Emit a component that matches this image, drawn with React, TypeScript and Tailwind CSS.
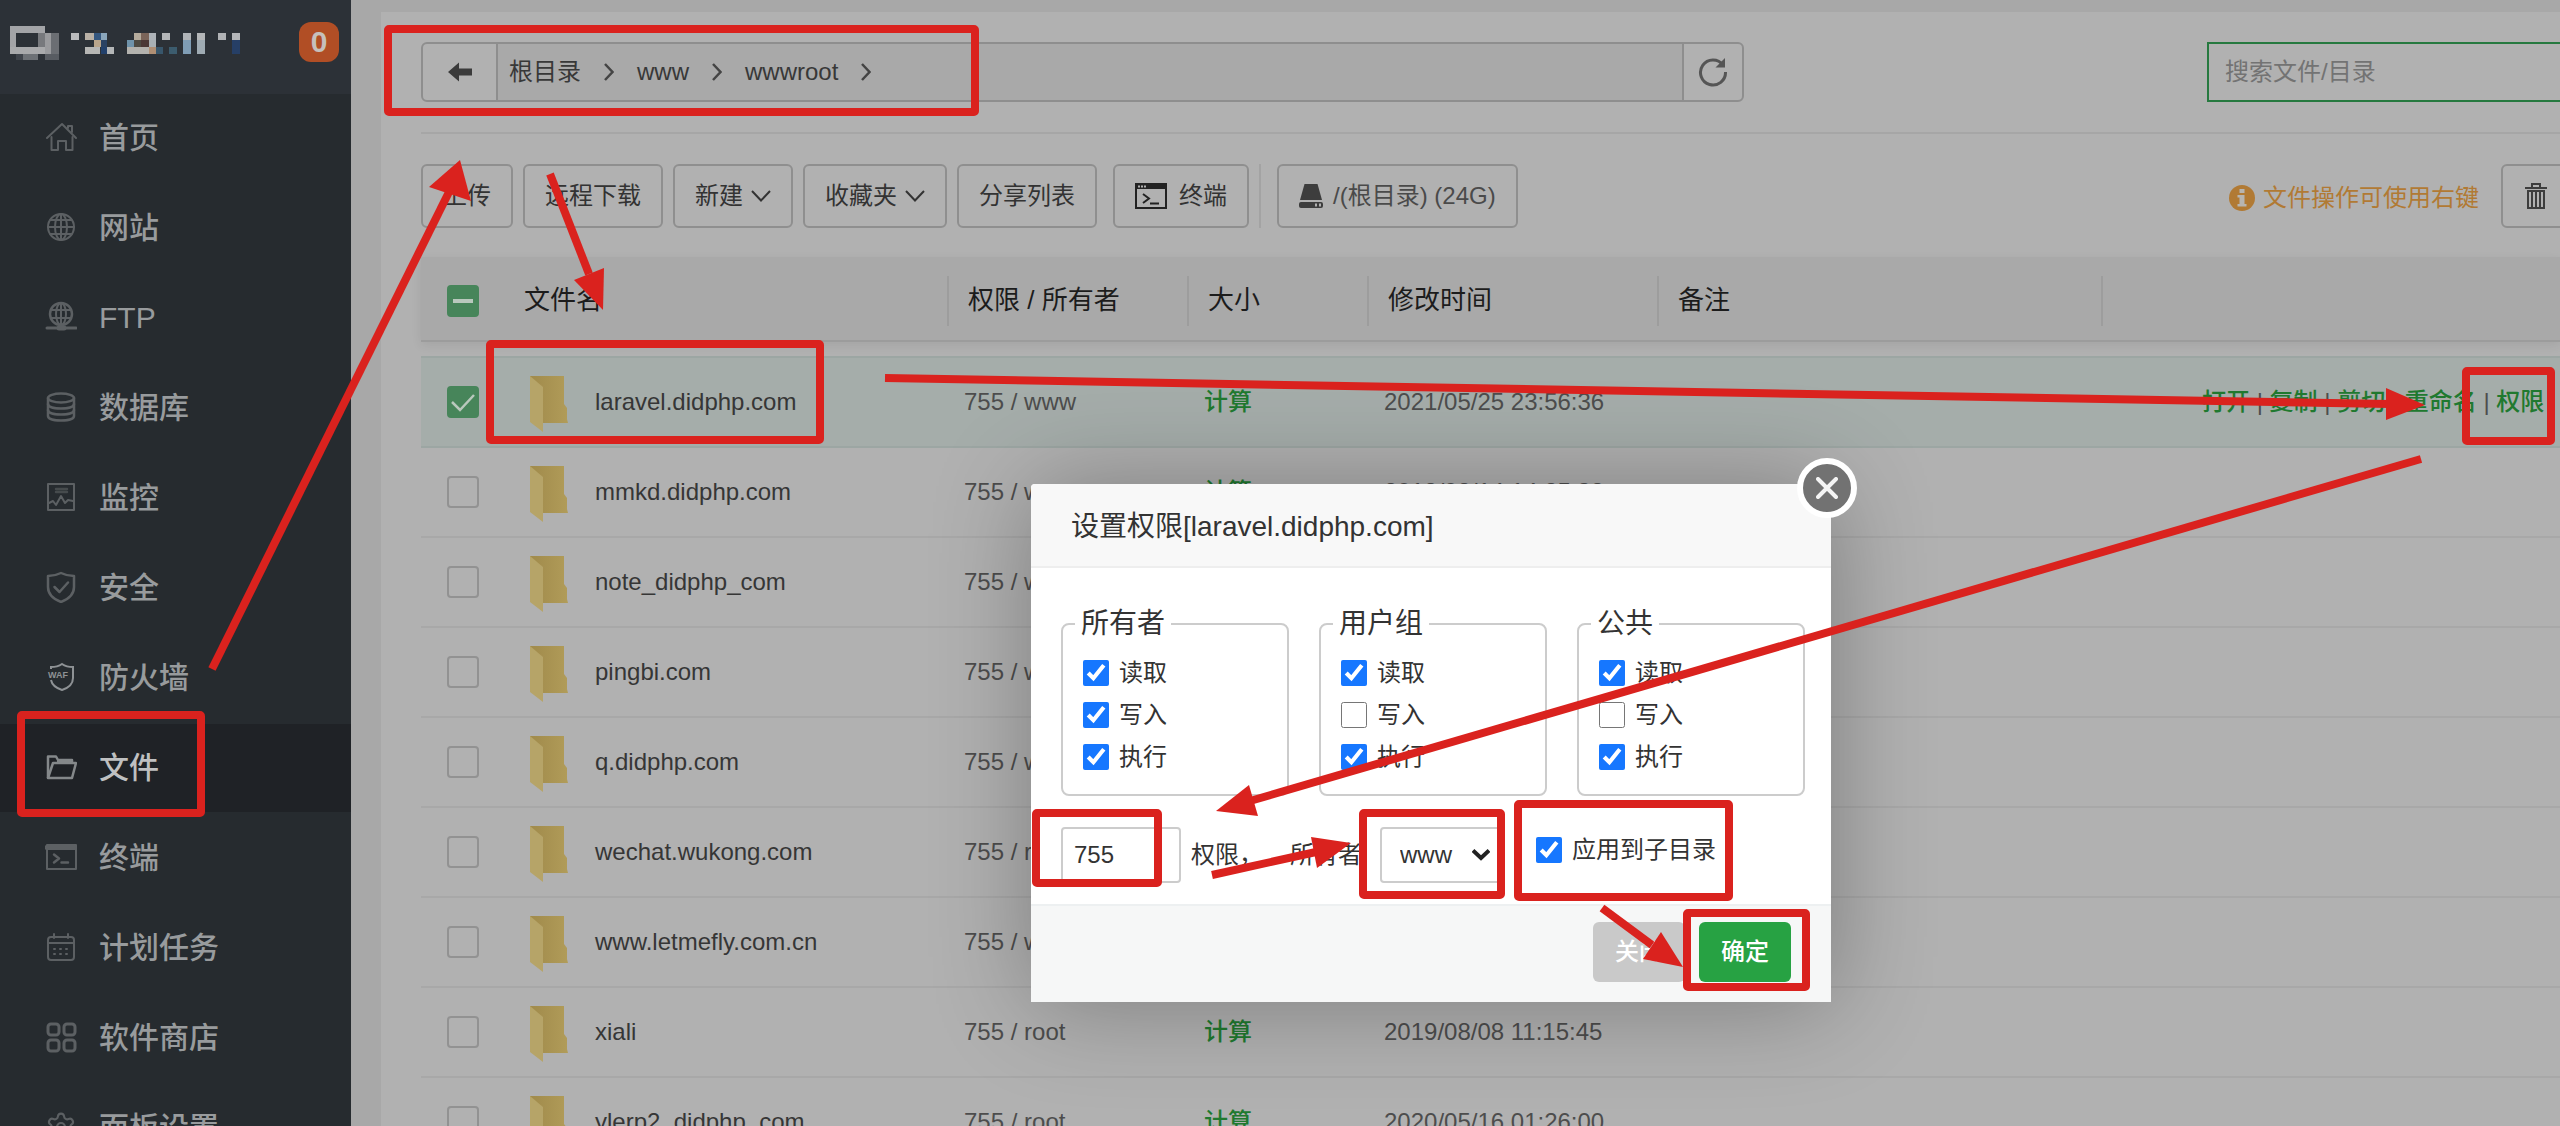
import type { ReactNode } from "react";
import { Settings } from "lucide-react";

/* ---------- sidebar icons (32 x 32) ---------- */

function Glyph({ children }: { children: ReactNode }) {
  return (
    <svg
      viewBox="0 0 32 32"
      className="size-8 shrink-0"
      fill="none"
      stroke="currentColor"
      strokeWidth="2"
      strokeLinecap="round"
      strokeLinejoin="round"
      aria-hidden="true"
    >
      {children}
    </svg>
  );
}

const HomeGlyph = (
  <Glyph>
    <path d="M2 17 L17 3 L31 17" />
    <path d="M23 7 V5 H27 V11" />
    <path d="M6.500 16 V29 H13 V20 H21 V29 H27.500 V16" />
  </Glyph>
);
const GlobeGlyph = (
  <Glyph>
    <circle cx="16" cy="16" r="13" />
    <ellipse cx="16" cy="16" rx="6" ry="13" />
    <path d="M16 3 V29 M3 16 H29 M5.500 9 H26.500 M5.500 23 H26.500" />
  </Glyph>
);
const FtpGlyph = (
  <Glyph>
    <circle cx="16" cy="13" r="11" strokeWidth="2.500" />
    <ellipse cx="16" cy="13" rx="5" ry="11" />
    <path d="M16 2 V24 M6 9 H26 M6 17 H26" />
    <path d="M2 27 H31" strokeWidth="3" />
    <path d="M14 27 H19" strokeWidth="5" />
  </Glyph>
);
const DatabaseGlyph = (
  <Glyph>
    <g strokeWidth="2.500">
      <ellipse cx="16" cy="7" rx="13" ry="4.500" />
      <path d="M3 7 V25 C3 31 29 31 29 25 V7" />
      <path d="M3 13 C3 19 29 19 29 13 M3 19 C3 25 29 25 29 19" />
    </g>
  </Glyph>
);
const MonitorGlyph = (
  <Glyph>
    <rect x="3" y="3" width="26" height="26" />
    <path d="M11 8 H22 M11 11 H22" strokeWidth="2.500" opacity="0.6" />
    <path d="M4 22 L8 20 L11 24 L16 15 L20 22 L23 19 L28 20" />
  </Glyph>
);
const SecurityGlyph = (
  <Glyph>
    <path d="M16 2 C12 4 8 5 3 5 V16 C3 23 8 28 16 31 C24 28 29 23 29 16 V5 C24 5 20 4 16 2 Z" strokeWidth="2.500" />
    <path d="M9.500 16 L14.500 21 L23 11.500" strokeWidth="2.500" />
  </Glyph>
);
const WafGlyph = (
  <svg viewBox="0 0 32 32" className="size-8 shrink-0 text-[#8e9295]" fill="none" stroke="currentColor" strokeWidth="2" aria-hidden="true">
    <path d="M6 8 V6 C11 6 14 5 17 3 C20 5 23 6 28 6 V17 C28 23 23 27 17 29 C11 27 7 24 6 19" />
    <text x="3" y="17" fontSize="9" fontWeight="700" stroke="none" fill="currentColor" fontFamily="Liberation Sans, sans-serif">
      WAF
    </text>
  </svg>
);
const FolderGlyph = (
  <svg viewBox="0 0 32 32" className="size-8 shrink-0 text-[#84888a]" fill="none" stroke="currentColor" strokeWidth="2.500" strokeLinejoin="round" aria-hidden="true">
    <path d="M3 27 V5.500 H11 L13 9 H27 V12" />
    <path d="M3 27 L8 12 H31 L27 27 Z" />
    <path d="M12 9.500 H27" strokeWidth="3" />
  </svg>
);
const TerminalGlyph = (
  <Glyph>
    <rect x="2" y="4" width="29" height="24" />
    <path d="M2 6.500 H31" strokeWidth="5" />
    <path d="M9 13.500 L14 17.500 L9 21.500 M16.500 21.500 H23" strokeWidth="2.500" />
  </Glyph>
);
const CalendarGlyph = (
  <Glyph>
    <rect x="3" y="6" width="26" height="23" rx="3" />
    <path d="M3 12 H29 M9 3 V7 M23 3 V7" />
    <path d="M9 18 H10 M15 18 H16 M21 18 H22 M9 23 H10 M15 23 H16 M21 23 H22" />
  </Glyph>
);
const StoreGlyph = (
  <Glyph>
    <g strokeWidth="3">
      <rect x="3" y="3" width="11" height="11" rx="3" />
      <rect x="19" y="3" width="11" height="11" rx="3" />
      <rect x="3" y="19" width="11" height="11" rx="3" />
      <rect x="19" y="19" width="11" height="11" rx="3" />
    </g>
  </Glyph>
);

const menu: { label: string; icon: ReactNode; active?: boolean }[] = [
  { label: "首页", icon: HomeGlyph },
  { label: "网站", icon: GlobeGlyph },
  { label: "FTP", icon: FtpGlyph },
  { label: "数据库", icon: DatabaseGlyph },
  { label: "监控", icon: MonitorGlyph },
  { label: "安全", icon: SecurityGlyph },
  { label: "防火墙", icon: WafGlyph },
  { label: "文件", icon: FolderGlyph, active: true },
  { label: "终端", icon: TerminalGlyph },
  { label: "计划任务", icon: CalendarGlyph },
  { label: "软件商店", icon: StoreGlyph },
  { label: "面板设置", icon: <Settings className="size-8 shrink-0" strokeWidth={1.6} /> },
];

/* Pixelated host name: x, y, width, height, colour */
const mosaic: [number, number, number, number, string][] = [
  [10, 26, 35, 7, "#a3a4a7"], [10, 26, 6, 28, "#a3a4a7"], [10, 47, 35, 7, "#a9aaac"],
  [38, 33, 7, 14, "#77797d"], [45, 33, 6, 21, "#9a9b9e"], [51, 33, 8, 21, "#6b6e73"],
  [16, 54, 7, 6, "#3f444b"], [23, 54, 15, 6, "#6d7176"], [45, 54, 14, 6, "#585c62"],
  [71, 33, 8, 7, "#b9babc"],
  [85, 33, 9, 7, "#b9b0a5"], [94, 33, 7, 7, "#35577f"], [101, 33, 6, 7, "#8ba6bb"],
  [94, 40, 7, 7, "#b9a58b"], [101, 40, 6, 7, "#2a4263"],
  [85, 47, 15, 7, "#b6b6b4"], [101, 47, 6, 7, "#22406b"], [107, 47, 7, 7, "#b5b7b8"],
  [134, 33, 7, 7, "#b5ab9c"], [141, 33, 8, 7, "#7a6459"], [149, 33, 7, 7, "#aeb3b8"],
  [127, 40, 7, 7, "#6f93ab"], [134, 40, 7, 7, "#4d4a43"], [141, 40, 8, 7, "#4b3836"], [149, 40, 7, 7, "#a9b0b4"],
  [127, 47, 22, 7, "#b3b2ae"], [149, 47, 7, 7, "#b08f74"], [156, 47, 7, 7, "#38566b"],
  [162, 33, 8, 7, "#b4b6b8"], [169, 47, 8, 7, "#3c5c6e"],
  [183, 33, 8, 7, "#b0b4b8"], [183, 40, 8, 14, "#7f9db5"],
  [197, 33, 8, 7, "#b4b6b8"], [197, 40, 8, 14, "#9fabb3"],
  [218, 33, 8, 7, "#b0b2b5"], [232, 33, 8, 7, "#b4b6b9"], [232, 40, 8, 14, "#263f66"],
];

function Sidebar() {
  return (
    <aside className="w-[351px] shrink-0 bg-[#262b2f] text-[#989b9d]">
      <div className="flex h-[94px] items-start justify-between bg-[#2c3137] pr-3">
        <svg viewBox="0 0 250 70" className="h-[70px] w-[250px]" role="img" aria-label="Host">
          {mosaic.map(([x, y, w, h, fill], i) => (
            <rect key={i} x={x} y={y} width={w} height={h} fill={fill} />
          ))}
        </svg>
        <span className="mt-[22px] grid h-10 w-10 place-items-center rounded-xl bg-[#b14e25] text-[30px] leading-8 font-bold text-[#c6c0bc]">
          0
        </span>
      </div>
      <nav className="flex flex-col gap-[2px]">
        {menu.map((m) => (
          <a
            key={m.label}
            href="#"
            className={
              m.active
                ? "flex h-[88px] items-center gap-[22px] bg-[#1f2226] pb-[2px] pl-[45px] text-[30px] font-medium text-[#bfc0c1]"
                : "flex h-[88px] items-center gap-[22px] pb-[2px] pl-[45px] text-[30px] font-medium"
            }
          >
            <span className="text-[#5c6063]">{m.icon}</span>
            {m.label}
          </a>
        ))}
      </nav>
    </aside>
  );
}

/* ---------- file manager ---------- */

function Angle() {
  return (
    <svg viewBox="0 0 10 18" className="h-[18px] w-[10px]" fill="none" stroke="#444" strokeWidth="2.500" aria-hidden="true">
      <path d="M1 1 L8.500 9 L1 17" />
    </svg>
  );
}

function Caret() {
  return (
    <svg viewBox="0 0 20 12" className="h-3 w-5" fill="none" stroke="#333" strokeWidth="2" aria-hidden="true">
      <path d="M1 1 L10 10.500 L19 1" />
    </svg>
  );
}

function PathBar() {
  return (
    <div className="flex h-[60px] w-[1323px] shrink-0 rounded-md border-2 border-[#8e8e8e] text-[24px] text-[#383838]">
      <button aria-label="返回" className="grid w-[75px] place-items-center border-r-2 border-[#8e8e8e]">
        <svg viewBox="0 0 24 20" className="h-5 w-6" fill="#3b3b3b" aria-hidden="true">
          <path d="M0 10 L11 0.500 V6.500 H24 V13.500 H11 V19.500 Z" />
        </svg>
      </button>
      <div className="flex flex-1 items-center gap-[23px] bg-[#a9a9a9] pl-[11px]">
        <a href="#">根目录</a>
        <Angle />
        <a href="#">www</a>
        <Angle />
        <a href="#">wwwroot</a>
        <Angle />
      </div>
      <button aria-label="刷新" className="grid w-[60px] place-items-center border-l-2 border-[#8e8e8e]">
        <svg viewBox="0 0 30 30" className="size-[30px]" fill="none" stroke="#555" strokeWidth="3" aria-hidden="true">
          <path d="M25 8 A12.500 12.500 0 1 0 27.500 15" />
          <path d="M27 1 V10.500 H17.500 Z" fill="#555" stroke="none" />
        </svg>
      </button>
    </div>
  );
}

function ToolButton({ children }: { children: ReactNode }) {
  return (
    <button className="flex h-16 shrink-0 items-center gap-2 rounded-md border-2 border-[#8f8f8f] px-5 text-[24px] whitespace-nowrap text-[#333]">
      {children}
    </button>
  );
}

function Toolbar() {
  return (
    <div className="flex items-center gap-[10px]">
      <ToolButton>上传</ToolButton>
      <ToolButton>远程下载</ToolButton>
      <ToolButton>
        新建
        <Caret />
      </ToolButton>
      <ToolButton>
        收藏夹
        <Caret />
      </ToolButton>
      <ToolButton>分享列表</ToolButton>
      <div className="ml-[6px] flex gap-[10px]">
        <ToolButton>
          <svg viewBox="0 0 32 26" className="mr-1 h-[26px] w-8" fill="none" stroke="#222" strokeWidth="2" aria-hidden="true">
            <rect x="1" y="1" width="30" height="24" />
            <path d="M1 3.500 H31" strokeWidth="5" />
            <path d="M3 3.500 H12" stroke="#b1b1b1" strokeDasharray="2 1" />
            <path d="M8 11 L14 15.500 L8 20 M15 20.500 H24" />
          </svg>
          终端
        </ToolButton>
        <div className="w-[2px] bg-[#a3a3a3]" />
      </div>
      <div className="ml-[6px]">
        <ToolButton>
          <svg viewBox="0 0 24 24" className="mr-[2px] size-6" fill="#3d3d3d" aria-hidden="true">
            <path d="M5.500 0 H18.500 L23 16 H1 Z" />
            <path fillRule="evenodd" d="M2 18 H22 Q24 18 24 20 V22 Q24 24 22 24 H2 Q0 24 0 22 V20 Q0 18 2 18 Z M16 19.500 V22.500 H18 V19.500 Z M20 19.500 V22.500 H22 V19.500 Z" />
          </svg>
          <span className="text-[#4a4a4a]">/(根目录) (24G)</span>
        </ToolButton>
      </div>
      <div className="ml-auto flex items-center gap-[22px]">
        <p className="flex items-center gap-2 pt-1 text-[24px] whitespace-nowrap text-[#b17a34]">
          <svg viewBox="0 0 26 26" className="size-[26px]" fill="#b17a34" aria-hidden="true">
            <circle cx="13" cy="13" r="13" />
            <path d="M10.500 4 H15.500 V8 H10.500 Z M8.500 10 H15.500 V19 H17.500 V21.500 H8.500 V19 H10.500 V12.500 H8.500 Z" fill="#b7b5b1" />
          </svg>
          文件操作可使用右键
        </p>
        <ToolButton>
          <svg viewBox="0 0 22 26" className="mr-1 ml-[2px] h-[26px] w-[22px]" fill="none" stroke="#3d3d3d" strokeWidth="2" aria-hidden="true">
            <path d="M0 5 H22 M7 5 V1 H15 V5" />
            <path d="M3 8 V25 H19 V8 Z M7 8 V24 M11 8 V24 M15 8 V24" />
          </svg>
          回收站
        </ToolButton>
      </div>
    </div>
  );
}

function RowCheckbox({ name, state }: { name: string; state: "on" | "off" | "mixed" }) {
  return (
    <span className="grid size-8">
      <input
        type="checkbox"
        aria-label={name}
        defaultChecked={state !== "off"}
        className="col-start-1 row-start-1 size-8 appearance-none rounded border-2 border-[#929292] checked:border-[#47855a] checked:bg-[#47855a]"
      />
      {state !== "off" && (
        <svg viewBox="0 0 32 32" className="pointer-events-none col-start-1 row-start-1 size-8" fill="none" stroke="#b9c8bd" strokeWidth={state === "mixed" ? 4 : 2.5} aria-hidden="true">
          <path d={state === "mixed" ? "M6 16 H26" : "M5 16 L13 24 L27 9"} />
        </svg>
      )}
    </span>
  );
}

function Folder() {
  return (
    <svg viewBox="0 0 38 56" className="h-14 w-[38px]" aria-hidden="true">
      <defs>
        <linearGradient id="folderBack" x1="0" y1="0" x2="1" y2="0">
          <stop offset="0" stopColor="#a08a4b" />
          <stop offset="1" stopColor="#b19c59" />
        </linearGradient>
      </defs>
      <path d="M0 0 H34 V28 L37 32 V43 L38 47 H5 Z" fill="url(#folderBack)" />
      <path d="M0 0 L13 11 V56 L0 46 Z" fill="#b6a468" />
    </svg>
  );
}

const headers = ["权限 / 所有者", "大小", "修改时间", "备注", ""];

const files: { name: string; owner: string; date: string; selected?: boolean }[] = [
  { name: "laravel.didphp.com", owner: "755 / www", date: "2021/05/25 23:56:36", selected: true },
  { name: "mmkd.didphp.com", owner: "755 / www", date: "2018/08/14 14:25:38" },
  { name: "note_didphp_com", owner: "755 / www", date: "2018/08/14 14:25:38" },
  { name: "pingbi.com", owner: "755 / www", date: "2018/08/14 14:25:38" },
  { name: "q.didphp.com", owner: "755 / www", date: "2018/08/14 14:25:38" },
  { name: "wechat.wukong.com", owner: "755 / root", date: "2019/08/08 11:15:45" },
  { name: "www.letmefly.com.cn", owner: "755 / www", date: "2019/08/08 11:15:45" },
  { name: "xiali", owner: "755 / root", date: "2019/08/08 11:15:45" },
  { name: "ylerp2_didphp_com", owner: "755 / root", date: "2020/05/16 01:26:00" },
];

const actions = ["打开", "复制", "剪切", "重命名", "权限"];

function Columns() {
  return (
    <colgroup>
      <col className="w-[83px]" />
      <col className="w-[443px]" />
      <col className="w-[240px]" />
      <col className="w-[180px]" />
      <col className="w-[290px]" />
      <col className="w-[444px]" />
      <col />
    </colgroup>
  );
}

function FileTable() {
  return (
    <table className="w-full table-fixed border-collapse text-left text-[24px]">
      <Columns />
      <thead>
        <tr className="h-[84px] border-b-2 border-[#9c9c9c] bg-[#a9a9a9] text-[26px] text-[#1c1c1c] shadow-[0_4px_10px_rgba(0,0,0,0.08)]">
          <th className="pt-1 pl-[26px]">
            <RowCheckbox name="全选" state="mixed" />
          </th>
          <th className="pt-1 pl-5 font-normal">文件名</th>
          {headers.map((h, i) => (
            <th key={i} className="pt-1 font-normal">
              <div className="flex h-[50px] items-center border-l-2 border-[#9d9d9d] pl-[19px]">{h}</div>
            </th>
          ))}
        </tr>
      </thead>
      <tbody>
        <tr className="h-4">
          <td colSpan={7} />
        </tr>
        {files.map((f) => (
          <tr
            key={f.name}
            className={
              f.selected
                ? "h-[90px] border-y-2 border-[#9ca6a3] bg-[#a5adaa] text-[#4d4d4d]"
                : "h-[90px] border-b-2 border-[#a8a8a8] text-[#4d4d4d]"
            }
          >
            <td className="pl-[26px]">
              <RowCheckbox name={f.name} state={f.selected ? "on" : "off"} />
            </td>
            <td className="pl-[26px]">
              <a href="#" className="flex items-center gap-[27px] text-[#363636]">
                <span className="pt-1">
                  <Folder />
                </span>
                {f.name}
              </a>
            </td>
            <td className="pl-[17px]">{f.owner}</td>
            <td className="pl-[17px]">
              <a href="#" className="font-medium text-[#20792f]">
                计算
              </a>
            </td>
            <td className="pl-[17px]">{f.date}</td>
            <td />
            <td className="pl-[101px] whitespace-nowrap">
              {f.selected &&
                actions.map((a, i) => (
                  <span key={a}>
                    {i > 0 && " | "}
                    <a href="#" className="font-medium text-[#20792f]">
                      {a}
                    </a>
                  </span>
                ))}
            </td>
          </tr>
        ))}
      </tbody>
    </table>
  );
}

/* ---------- permission dialog ---------- */

function Tick({ label, on }: { label: string; on: boolean }) {
  return (
    <label className="flex h-[42px] items-center gap-[10px] text-[24px] text-[#333]">
      <input type="checkbox" defaultChecked={on} className="size-[26px] accent-[#1677ff]" />
      {label}
    </label>
  );
}

const groups = [
  { title: "所有者", read: true, write: true, run: true },
  { title: "用户组", read: true, write: false, run: true },
  { title: "公共", read: true, write: false, run: true },
];

function PermissionDialog() {
  return (
    <section
      role="dialog"
      aria-label="设置权限"
      className="absolute top-[484px] left-[1031px] flex w-[800px] flex-col rounded bg-white text-[24px] text-[#333] shadow-[2px_2px_100px_rgba(0,0,0,0.3)]"
    >
      <button
        aria-label="关闭窗口"
        className="absolute -top-[26px] -right-[26px] grid size-[60px] place-items-center rounded-full border-[6px] border-white bg-[#727272]"
      >
        <svg viewBox="0 0 22 22" className="size-[22px]" stroke="#f4f4f4" strokeWidth="4" strokeLinecap="round" aria-hidden="true">
          <path d="M2 2 L20 20 M20 2 L2 20" />
        </svg>
      </button>
      <h2 className="flex h-[84px] items-center rounded-t border-b-2 border-[#eee] bg-[#f8f8f8] pt-1 pl-10 text-[28px] text-[#333]">
        设置权限[laravel.didphp.com]
      </h2>
      <div className="flex flex-col pt-9 pb-[21px] pl-[30px]">
        <div className="flex gap-[30px]">
          {groups.map((g) => (
            <fieldset key={g.title} className="h-[192px] w-[228px] shrink-0 rounded-lg border-2 border-[#ccc] px-5">
              <legend className="-ml-2 px-[6px] text-[28px] leading-10">{g.title}</legend>
              <div className="pt-2">
                <Tick label="读取" on={g.read} />
                <Tick label="写入" on={g.write} />
                <Tick label="执行" on={g.run} />
              </div>
            </fieldset>
          ))}
        </div>
        <div className="mt-[31px] flex h-14 items-center">
          <label className="flex items-center gap-[10px]">
            <input
              type="text"
              defaultValue="755"
              className="h-14 w-[120px] rounded border-2 border-[#ccc] px-[11px] text-[24px]"
            />
            权限，
          </label>
          <label className="ml-[27px] flex items-center gap-[18px]">
            所有者
            <span className="grid">
              <select defaultValue="www" className="col-start-1 row-start-1 h-14 w-[122px] appearance-none rounded border-2 border-[#ccc] bg-white pl-[18px] text-[24px]">
                <option value="www">www</option>
                <option value="root">root</option>
              </select>
              <svg viewBox="0 0 18 12" className="pointer-events-none col-start-1 row-start-1 mr-3 h-3 w-[18px] self-center justify-self-end" fill="none" stroke="#222" strokeWidth="4" aria-hidden="true">
                <path d="M1 1.500 L9 9 L17 1.500" />
              </svg>
            </span>
          </label>
          <div className="mb-[10px] ml-[34px]">
            <Tick label="应用到子目录" on />
          </div>
        </div>
      </div>
      <div className="flex justify-end gap-[14px] border-t-2 border-[#edf0f1] bg-[#f6f7f7] pt-4 pr-10 pb-5 text-white">
        <button className="h-[60px] rounded-md bg-[#c9c9c9] px-[22px] font-medium">关闭</button>
        <button className="h-[60px] rounded-md bg-[#27a243] px-[22px] font-medium">确定</button>
      </div>
    </section>
  );
}

/* ---------- tutorial marks drawn over the screen ---------- */

const frames: [number, number, number, number][] = [
  [384, 25, 979, 116],
  [17, 711, 205, 817],
  [486, 340, 824, 444],
  [2462, 367, 2555, 445],
  [1032, 809, 1162, 887],
  [1359, 809, 1505, 899],
  [1514, 800, 1733, 901],
  [1683, 909, 1810, 991],
];

const arrows = [
  { line: "M212 669 L450 190", head: "460,160 429,187 471,201" },
  { line: "M550 174 L589 274", head: "603,310 574,280 604,268" },
  { line: "M885 378 L2390 404", head: "2425,405 2386,388 2386,420" },
  { line: "M2421 459 L1250 801", head: "1216,811 1249,785 1258,816" },
  { line: "M1212 875 L1316 852", head: "1351,843 1311,837 1317,868" },
  { line: "M1602 908 L1652 945", head: "1683,967 1661,932 1643,959" },
];

function Marks() {
  return (
    <svg
      viewBox="0 0 2560 1126"
      className="pointer-events-none absolute top-0 left-0 h-[1126px] w-[2560px]"
      fill="none"
      stroke="#da221e"
      strokeWidth="8"
      aria-hidden="true"
    >
      {frames.map(([l, t, r, b]) => (
        <rect key={l} x={l + 4} y={t + 4} width={r - l - 8} height={b - t - 8} rx="1" strokeLinejoin="round" />
      ))}
      {arrows.map((a) => (
        <g key={a.head}>
          <path d={a.line} />
          <polygon points={a.head} fill="#da221e" stroke="none" />
        </g>
      ))}
    </svg>
  );
}

export default function App() {
  return (
    <div className="relative flex h-screen overflow-hidden bg-[#a8a8a8] font-['Liberation_Sans','Noto_Sans_CJK_SC',sans-serif]">
      <Sidebar />
      <main className="min-w-0 flex-1 pt-3 pl-[30px]">
        <div className="flex flex-col bg-[#b1b1b1] pt-[30px] pl-10">
          <div className="flex justify-between border-b-2 border-[#a6a6a6] pb-[30px]">
            <PathBar />
            <input
              type="text"
              aria-label="搜索文件/目录"
              placeholder="搜索文件/目录"
              className="h-[60px] w-[353px] border-2 border-r-0 border-[#26793f] px-4 text-[24px] placeholder:text-[#737373]"
            />
          </div>
          <div className="-mr-[93px] pt-[30px]">
            <Toolbar />
          </div>
          <div className="pt-[29px]">
            <FileTable />
          </div>
        </div>
      </main>
      <PermissionDialog />
      <Marks />
    </div>
  );
}
